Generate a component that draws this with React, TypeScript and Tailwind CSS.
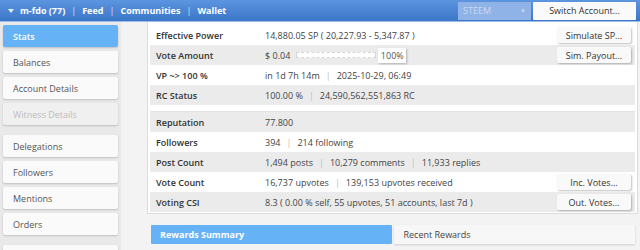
const Sep = ({ light }: { light?: boolean }) => (
  <span className={(light ? "text-[#d6e3f5] font-normal" : "text-[#bbb]") + " mx-[6px]"}>|</span>
);

const SideItem = ({ label, active, disabled }: { label: string; active?: boolean; disabled?: boolean }) => (
  <div
    className={
      "h-[22px] flex items-center pl-[10px] rounded-[2px] shadow-[0_1px_2px_rgba(0,0,0,0.18)] " +
      (active
        ? "bg-[#66b2f7] text-white font-semibold"
        : disabled
        ? "bg-[#f0f0f0] text-[#bdbdbd]"
        : "bg-[#fafafa] text-[#555]")
    }
  >
    {label}
  </div>
);

const Btn = ({ label }: { label: string }) => (
  <div className="w-[74px] h-[16px] flex items-center justify-center bg-[#f9f9f9] text-[#333] rounded-[2px] shadow-[1px_1px_2px_rgba(0,0,0,0.25)]">
    {label}
  </div>
);

const Row = ({
  label,
  gray,
  children,
  btn,
}: {
  label: string;
  gray?: boolean;
  children: React.ReactNode;
  btn?: string;
}) => (
  <div className={"h-[20px] flex items-center pr-[4px] " + (gray ? "bg-[#ebebeb]" : "bg-white")}>
    <div className="w-[115px] pl-[6px] font-semibold text-[#333]">{label}</div>
    <div className="flex-1 flex items-center text-[#444] whitespace-nowrap">{children}</div>
    {btn && <Btn label={btn} />}
  </div>
);

export default function App() {
  return (
    <div className="w-[640px] h-[250px] overflow-hidden bg-[#f3f3f3] font-['Open_Sans',sans-serif] text-[9px] leading-none">
      {/* top bar */}
      <div className="h-[22px] flex items-center bg-gradient-to-b from-[#5c95df] to-[#3b76c8] border-b border-[#9cbde8]">
        <div className="flex items-center pl-[8px] text-white font-bold">
          <svg width="6" height="4" viewBox="0 0 6 4" className="mr-[6px]">
            <path d="M0 0H6L3 4Z" fill="#e3ecf9" />
          </svg>
          <span>m-fdo (77)</span>
          <Sep light />
          <span>Feed</span>
          <Sep light />
          <span>Communities</span>
          <Sep light />
          <span>Wallet</span>
        </div>
        <div className="ml-auto flex items-center gap-[2px] pr-[4px]">
          <div className="w-[73px] h-[18px] flex items-center justify-between px-[5px] bg-[#8fb3e6] text-[#c9daf3]">
            <span>STEEM</span>
            <span className="text-[6px]">▼</span>
          </div>
          <div className="w-[103px] h-[18px] flex items-center justify-center bg-[#fafafa] text-[#333] rounded-[1px]">
            Switch Account...
          </div>
        </div>
      </div>

      <div className="flex">
        {/* sidebar */}
        <div className="w-[121px] h-[228px] bg-[#e9e9e9] pl-[3px] pr-[3px] pt-[3px] flex flex-col">
          <div className="flex flex-col gap-[4px]">
            <SideItem label="Stats" active />
            <SideItem label="Balances" />
            <SideItem label="Account Details" />
            <SideItem label="Witness Details" disabled />
          </div>
          <div className="flex flex-col gap-[4px] mt-[10px]">
            <SideItem label="Delegations" />
            <SideItem label="Followers" />
            <SideItem label="Mentions" />
            <SideItem label="Orders" />
          </div>
          <div className="mt-[10px]">
            <SideItem label="" />
          </div>
        </div>

        {/* main */}
        <div className="flex-1 pl-[26px] pr-[2px]">
          <div className="bg-white border-l border-r border-b border-[#dcdcdc] pt-[3px] pb-[1px] pl-[2px] pr-[2px]">
            <Row label="Effective Power" btn="Simulate SP...">
              14,880.05 SP ( 20,227.93 - 5,347.87 )
            </Row>
            <Row label="Vote Amount" gray btn="Sim. Payout...">
              <span>$ 0.04</span>
              <div className="ml-[6px] w-[80px] h-[6px] border border-dashed border-[#d6d6d6] bg-white" />
              <div className="ml-[2px] w-[28px] h-[15px] flex items-center justify-center bg-white text-[#555] shadow-[1px_1px_2px_rgba(0,0,0,0.25)]">
                100%
              </div>
            </Row>
            <Row label="VP ~> 100 %">
              in 1d 7h 14m
              <Sep />
              2025-10-29, 06:49
            </Row>
            <Row label="RC Status" gray>
              100.00 %
              <Sep />
              24,590,562,551,863 RC
            </Row>
            <div className="h-[7px] border-b border-[#e2e2e2]" />
            <Row label="Reputation" gray>
              77.800
            </Row>
            <Row label="Followers">
              394
              <Sep />
              214 following
            </Row>
            <Row label="Post Count" gray>
              1,494 posts
              <Sep />
              10,279 comments
              <Sep />
              11,933 replies
            </Row>
            <Row label="Vote Count" btn="Inc. Votes...">
              16,737 upvotes
              <Sep />
              139,153 upvotes received
            </Row>
            <Row label="Voting CSI" gray btn="Out. Votes...">
              8.3 ( 0.00 % self, 55 upvotes, 51 accounts, last 7d )
            </Row>
          </div>

          <div className="mt-[11px] flex gap-[2px] pl-[4px] pr-[3px]">
            <div className="flex-1 h-[19px] flex items-center pl-[9px] bg-[#66b2f7] text-white font-bold rounded-[1px]">
              Rewards Summary
            </div>
            <div className="flex-1 h-[19px] flex items-center pl-[10px] bg-[#f7f7f7] text-[#444] shadow-[0_1px_2px_rgba(0,0,0,0.15)]">
              Recent Rewards
            </div>
          </div>
        </div>
      </div>
    </div>
  );
}
